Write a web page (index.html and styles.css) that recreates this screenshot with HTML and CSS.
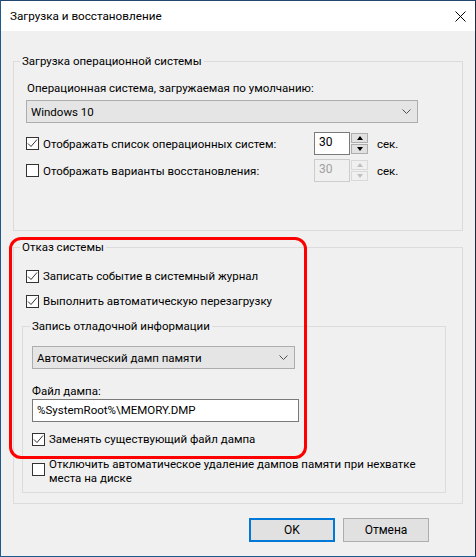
FILE: index.html
```html
<!DOCTYPE html>
<html lang="ru">
<head>
<meta charset="utf-8">
<title>Загрузка и восстановление</title>
<link rel="stylesheet" href="styles.css">
</head>
<body>
<div class="window">
  <div class="titlebar">
    <span class="title">Загрузка и восстановление</span>
    <svg class="close" width="11" height="11" viewBox="0 0 11 11"><path d="M0.5 0.5L10.5 10.5M10.5 0.5L0.5 10.5" stroke="#000" stroke-width="1" fill="none"/></svg>
  </div>
  <div class="content">
    <fieldset class="group g-boot">
      <legend>Загрузка операционной системы</legend>
      <div class="gbody">
        <div class="label lbl-os">Операционная система, загружаемая по умолчанию:</div>
        <div class="select sel-os"><span>Windows 10</span><svg class="chev" width="9" height="5" viewBox="0 0 9 5"><path d="M0.5 0.5L4.5 4.5L8.5 0.5" stroke="#505050" stroke-width="1" fill="none"/></svg></div>
        <div class="row row-spin r1">
          <div class="check w288"><span class="box"><svg width="11" height="11" viewBox="0 0 11 11"><path d="M1 5.5L4 8.5L10 1.5" stroke="#333" stroke-width="1" fill="none"/></svg></span><span>Отображать список операционных систем:</span></div>
          <div class="spin"><div class="spin-val">30</div><div class="spin-btns"><span class="sb"><i class="tri-up"></i></span><span class="sb"><i class="tri-down"></i></span></div></div>
          <span class="unit">сек.</span>
        </div>
        <div class="row row-spin r2">
          <div class="check w288"><span class="box"></span><span>Отображать варианты восстановления:</span></div>
          <div class="spin disabled"><div class="spin-val">30</div><div class="spin-btns"><span class="sb"><i class="tri-up"></i></span><span class="sb"><i class="tri-down"></i></span></div></div>
          <span class="unit">сек.</span>
        </div>
      </div>
    </fieldset>

    <fieldset class="group g-fail">
      <legend>Отказ системы</legend>
      <div class="gbody">
        <div class="check ca"><span class="box"><svg width="11" height="11" viewBox="0 0 11 11"><path d="M1 5.5L4 8.5L10 1.5" stroke="#333" stroke-width="1" fill="none"/></svg></span><span>Записать событие в системный журнал</span></div>
        <div class="check cb"><span class="box"><svg width="11" height="11" viewBox="0 0 11 11"><path d="M1 5.5L4 8.5L10 1.5" stroke="#333" stroke-width="1" fill="none"/></svg></span><span>Выполнить автоматическую перезагрузку</span></div>
        <fieldset class="group g-debug">
          <legend>Запись отладочной информации</legend>
          <div class="gbody">
            <div class="select sel-dump"><span>Автоматический дамп памяти</span><svg class="chev" width="9" height="5" viewBox="0 0 9 5"><path d="M0.5 0.5L4.5 4.5L8.5 0.5" stroke="#505050" stroke-width="1" fill="none"/></svg></div>
            <div class="label lbl-file">Файл дампа:</div>
            <div class="textbox">%SystemRoot%\MEMORY.DMP</div>
            <div class="check cc"><span class="box"><svg width="11" height="11" viewBox="0 0 11 11"><path d="M1 5.5L4 8.5L10 1.5" stroke="#333" stroke-width="1" fill="none"/></svg></span><span>Заменять существующий файл дампа</span></div>
            <div class="check cd"><span class="box"></span><span class="two">Отключить автоматическое удаление дампов памяти при нехватке<br>места на диске</span></div>
          </div>
        </fieldset>
      </div>
    </fieldset>

    <div class="buttons">
      <button class="btn btn-ok">OK</button>
      <button class="btn">Отмена</button>
    </div>
  </div>
  <div class="highlight"></div>
</div>
</body>
</html>
```
FILE: styles.css
```css
* { box-sizing: border-box; }
html, body { margin: 0; padding: 0; }
body {
  width: 476px;
  height: 557px;
  font-family: Roboto, "Noto Sans", sans-serif;
  font-size: 11.5px;
  color: #000;
  background: #f0f0f0;
  overflow: hidden;
}
.window {
  position: relative;
  width: 476px;
  height: 557px;
  border: 1px solid #1f5a8c;
  border-right-color: #1b2a48;
  border-top-color: #22466e;
  display: flex;
  flex-direction: column;
  background: #f0f0f0;
}
.titlebar {
  flex: none;
  height: 30px;
  background: #fff;
  display: flex;
  align-items: center;
  justify-content: space-between;
  padding: 0 9px 0 9px;
}
.title { line-height: 16px; font-size: 11.7px; }
.close { display: block; }

.content {
  flex: 1;
  display: flex;
  flex-direction: column;
  padding: 22px 12px 0 12px;
}
.content > * { flex: none; }

fieldset.group {
  margin: 0;
  padding: 0;
  border: 1px solid #dcdcdc;
  min-width: 0;
}
fieldset.group > legend {
  margin-left: 6px;
  padding: 0 2px;
  line-height: 16px;
}
.label { line-height: 16px; }

.select {
  height: 23px;
  border: 1px solid #adadad;
  background: #e5e5e5;
  display: flex;
  align-items: center;
  justify-content: space-between;
  padding: 0 6px 0 4px;
}
.chev { display: block; }

.check {
  display: flex;
  align-items: center;
  gap: 4px;
  line-height: 16px;
  white-space: nowrap;
}
.box {
  flex: none;
  width: 13px;
  height: 13px;
  border: 1px solid #333;
  background: #fff;
}
.box svg { display: block; }

/* group 1 */
.g-boot .gbody { padding: 11px 0 48px 12px; }
.lbl-os { margin-left: 1px; }
.sel-os { margin-top: 4px; width: 392px; }
.row-spin { display: flex; align-items: center; height: 23px; }
.r1 { margin-top: 9px; }
.r2 { margin-top: 4px; }
.w288 { width: 288px; flex: none; }
.spin { display: flex; height: 23px; }
.spin-val {
  width: 36px;
  height: 23px;
  border: 1px solid #7a7a7a;
  background: #fff;
  padding: 0 0 0 4px;
  line-height: 19px;
  font-size: 12px;
}
.spin-btns {
  margin-left: 1px;
  padding-top: 1px;
  display: flex;
  flex-direction: column;
  gap: 1px;
}
.sb {
  width: 17px;
  height: 10px;
  border: 1px solid #adadad;
  background: #e1e1e1;
  display: flex;
  align-items: center;
  justify-content: center;
}
.tri-up, .tri-down { display: block; width: 0; height: 0; border-left: 3.5px solid transparent; border-right: 3.5px solid transparent; }
.tri-up { border-bottom: 4px solid #000; }
.tri-down { border-top: 4px solid #000; }
.spin.disabled .spin-val { border-color: #cccccc; color: #a0a0a0; background: #f0f0f0; }
.spin.disabled .sb { border-color: #d9d9d9; background: #f0f0f0; }
.spin.disabled .tri-up { border-bottom-color: #bfbfbf; }
.spin.disabled .tri-down { border-top-color: #bfbfbf; }
.unit { margin-left: 9px; }

/* group 2 */
fieldset.g-fail { margin-top: 8px; }
.g-fail > .gbody { padding: 13px 0 10px 12px; }
.cb { margin-top: 9px; }
fieldset.g-debug { margin: 9px 16px 0 -4px; }
fieldset.g-debug > legend { margin-left: 7px; }
.g-debug .gbody { padding: 12px 0 7px 9px; }
.sel-dump { width: 263px; }
.lbl-file { margin-top: 15px; line-height: 15px; }
.textbox {
  width: 267px;
  height: 23px;
  border: 1px solid #7a7a7a;
  background: #fff;
  padding: 0 4px;
  line-height: 21px;
}
.cc { margin-top: 9px; }
.cd { margin-top: 10px; align-items: flex-start; }
.cd .box { margin-top: 6px; }
.cd .two { line-height: 14px; }

/* buttons */
.buttons {
  margin-top: 14px;
  display: flex;
  justify-content: flex-end;
  gap: 8px;
  padding-right: 34px;
}
.btn {
  width: 86px;
  height: 24px;
  margin: 0;
  padding: 0;
  font: inherit;
  font-size: 12px;
  color: #000;
  background: #e1e1e1;
  border: 1px solid #adadad;
}
.btn-ok { border: 2px solid #0078d7; }

/* red annotation */
.highlight {
  position: absolute;
  left: 8px;
  top: 236px;
  width: 298px;
  height: 222px;
  border: 3px solid #ff0000;
  border-radius: 12px;
  pointer-events: none;
}
```
